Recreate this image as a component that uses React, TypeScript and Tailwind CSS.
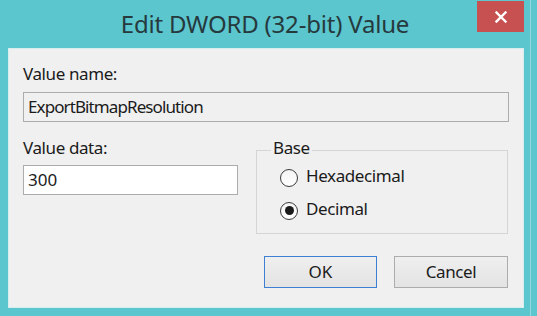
export default function App() {
  return (
    <div className="w-[537px] h-[316px] bg-[#5bc6ce] flex font-['Noto_Sans',sans-serif] text-[#1b1b1b]">
      <div className="w-[531px] h-full flex flex-col border-r border-[#93d9de]">
        <div className="h-[48px] relative flex items-center justify-center">
          <div className="text-[24px] leading-[48px] text-[#26393d] tracking-[-0.2px]">Edit DWORD (32-bit) Value</div>
          <button className="absolute left-[477px] top-[1px] w-[47px] h-[31px] bg-[#c75050] flex items-center justify-center">
            <svg width="12" height="12" viewBox="0 0 12 12">
              <path d="M1.5 1.5 L10.5 10.5 M10.5 1.5 L1.5 10.5" stroke="#ffffff" strokeWidth="2.4" strokeLinecap="square" />
            </svg>
          </button>
        </div>
        <div className="ml-[8px] w-[516px] h-[260px] bg-[#f0f0f0] border border-[#d6eef0] pt-[14px] pl-[14px] pr-[15px] flex flex-col">
          <div className="text-[17px] leading-[22px] tracking-[-0.4px]">Value name:</div>
          <div className="mt-[7px] w-[486px] h-[30px] border border-[#acacac] bg-[#f0f0f0] pl-[4px] text-[17px] leading-[28px] tracking-[-0.9px]">
            ExportBitmapResolution
          </div>
          <div className="mt-[15px] flex items-start">
            <div className="w-[215px] flex flex-col">
              <div className="text-[17px] leading-[22px] tracking-[-0.4px]">Value data:</div>
              <div className="mt-[6px] w-[215px] h-[30px] border border-[#acacac] bg-white pl-[4px] text-[17px] leading-[28px]">300</div>
            </div>
            <fieldset className="ml-[18px] w-[252px] border border-[#d5d5d5] pt-[2px] pb-[13px]">
              <legend className="ml-[14px] px-[2px] pb-[4px] text-[17px] leading-[22px] tracking-[-0.4px]">Base</legend>
              <div className="pl-[23px] flex flex-col gap-[11px]">
                <div className="flex items-center h-[22px]">
                  <span className="w-[18px] h-[18px] rounded-full border border-[#3c3c3c] bg-gradient-to-b from-[#f4f4f4] to-white mt-[3px]" />
                  <span className="ml-[8px] text-[17px] leading-[22px] tracking-[-0.4px]">Hexadecimal</span>
                </div>
                <div className="flex items-center h-[22px]">
                  <span className="w-[18px] h-[18px] rounded-full border border-[#3c3c3c] bg-gradient-to-b from-[#f4f4f4] to-white mt-[3px] flex items-center justify-center">
                    <span className="w-[9px] h-[9px] rounded-full bg-[#1a1a1a]" />
                  </span>
                  <span className="ml-[8px] text-[17px] leading-[22px] tracking-[-0.4px]">Decimal</span>
                </div>
              </div>
            </fieldset>
          </div>
          <div className="mt-[22px] flex justify-end gap-[17px]">
            <button className="w-[113px] h-[32px] border border-[#3d7fd3] bg-gradient-to-b from-[#efefef] to-[#e3e3e3] text-[17px] leading-[30px] text-[#1b1b1b]">OK</button>
            <button className="w-[114px] h-[32px] border border-[#acacac] bg-gradient-to-b from-[#efefef] to-[#e3e3e3] text-[17px] leading-[30px] text-[#1b1b1b] tracking-[-0.4px]">Cancel</button>
          </div>
        </div>
      </div>
    </div>
  );
}
